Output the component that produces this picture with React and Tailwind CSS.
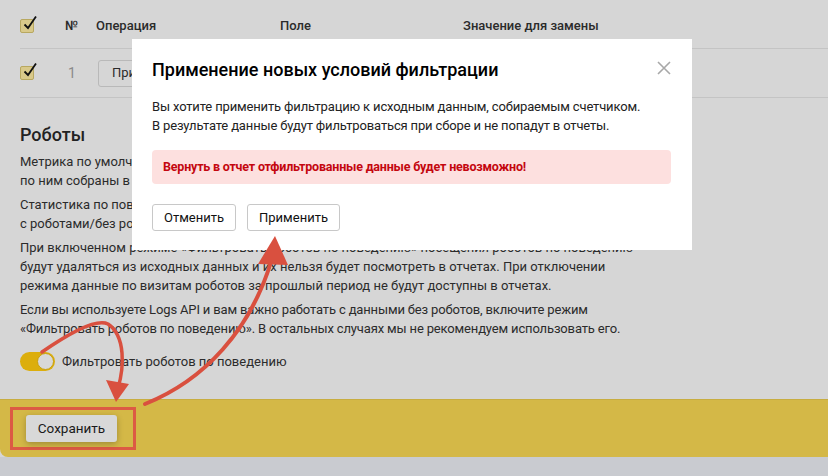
import React from 'react';

const Check = () => (
    <div className="w-[14px] h-[14px] rounded-[2px] border border-[#b8a860] bg-[#d9c98a] relative">
        <svg viewBox="0 0 16 16" className="absolute -top-[5px] left-[1px] w-[16px] h-[16px]">
            <path d="M2.5 9.5 L6 13 L14 1.5" fill="none" stroke="#111" strokeWidth="1.8" />
        </svg>
    </div>
);

const App = () => {
    return (
        <div className="relative w-[828px] h-[476px] overflow-hidden bg-[#d6d6d6] text-[#2b2b2b] font-['Roboto',sans-serif] text-[13px]">

            {/* Table */}
            <div className="pl-5">
                <div className="h-[49px] pt-[3px] flex items-center border-b border-[#c4c4c4]">
                    <div className="w-[45px]"><Check /></div>
                    <div className="w-[31px] font-medium">№</div>
                    <div className="w-[184px] font-medium">Операция</div>
                    <div className="w-[183px] font-medium">Поле</div>
                    <div className="font-medium">Значение для замены</div>
                </div>
                <div className="h-[49px] flex items-center border-b border-[#c4c4c4]">
                    <div className="w-[48px]"><Check /></div>
                    <div className="w-[30px] text-[#8a8a8a] text-[14px]">1</div>
                    <button className="h-[27px] px-[13px] border border-[#b9b9b9] rounded-[3px] text-[13px]">Применить</button>
                </div>
            </div>

            {/* Robots */}
            <div className="pl-5 w-[640px]">
                <div className="mt-[25px] text-[18px] font-medium leading-[24px] text-[#222]">Роботы</div>
                <div className="mt-[5px] flex flex-col gap-[5px] leading-[19px]">
                    <p>Метрика по умолчанию фильтрует роботов по строгим правилам, а данные<br />по ним собраны в отчете «Роботы».</p>
                    <p>Статистика по поведению роботов доступна в отчетах при выборе сегмента<br />с роботами/без роботов.</p>
                    <p>При включенном режиме «Фильтровать роботов по поведению» посещения роботов по поведению будут удаляться из исходных данных и их нельзя будет посмотреть в отчетах. При отключении режима данные по визитам роботов за прошлый период не будут доступны в отчетах.</p>
                    <p className="tracking-[-0.15px]">Если вы используете Logs API и вам важно работать с данными без роботов, включите режим «Фильтровать роботов по поведению». В остальных случаях мы не рекомендуем использовать его.</p>
                </div>
                <div className="mt-[14px] flex items-center gap-[7px]">
                    <div className="w-[35px] h-[19px] rounded-full bg-[#dcae0c] flex items-center justify-end pr-[1px]">
                        <div className="w-[17px] h-[17px] rounded-full bg-[#d8d8d8] border border-[#c9a00c]"></div>
                    </div>
                    <span>Фильтровать роботов по поведению</span>
                </div>
            </div>

            {/* Bottom bar */}
            <div className="absolute left-0 right-0 top-[399px] h-[58px] bg-[#d4b847] rounded-bl-[8px] border-t border-[#c8ad40] flex items-center pl-[10px]">
                <div className="w-[126px] h-[43px] border-[3px] border-[#dc5a44] flex items-center pl-[13px]">
                    <button className="h-[27px] w-[91px] rounded-[3px] bg-[#d8d8d8] text-[13.5px] text-[#1a1a1a] shadow-[0_2px_6px_rgba(0,0,0,0.25)]">Сохранить</button>
                </div>
            </div>
            <div className="absolute left-0 right-0 top-[457px] bottom-0 bg-[#c9cbd0]"></div>

            {/* Modal */}
            <div className="absolute left-[132px] top-[39px] w-[560px] h-[211px] bg-white px-5 pt-[18px] text-[#222]">
                <div className="flex items-start justify-between">
                    <div className="text-[18px] font-medium leading-[26px] text-black">Применение новых условий фильтрации</div>
                    <svg viewBox="0 0 16 16" className="w-[16px] h-[16px] mt-[3px]">
                        <path d="M2 2 L14 14 M14 2 L2 14" stroke="#a8a8a8" strokeWidth="1.6" />
                    </svg>
                </div>
                <div className="mt-[14px] leading-[19px] tracking-[-0.15px]">
                    <p>Вы хотите применить фильтрацию к исходным данным, собираемым счетчиком.</p>
                    <p>В результате данные будут фильтроваться при сборе и не попадут в отчеты.</p>
                </div>
                <div className="mt-[15px] mr-[1px] h-[34px] rounded-[4px] bg-[#fde0df] flex items-center px-[11px] font-bold text-[12.5px] tracking-[-0.2px] text-[#c4070f]">
                    Вернуть в отчет отфильтрованные данные будет невозможно!
                </div>
                <div className="mt-[20px] flex gap-[11px]">
                    <button className="h-[27px] px-[11px] border border-[#c8c8c8] rounded-[3px] text-[13px] text-[#111]">Отменить</button>
                    <button className="h-[27px] px-[11px] border border-[#c8c8c8] rounded-[3px] text-[13px] text-[#111]">Применить</button>
                </div>
            </div>

            {/* Annotation arrows */}
            <svg className="absolute inset-0 w-[828px] h-[476px] pointer-events-none" viewBox="0 0 828 476">
                <path d="M145 404 C 205 380, 250 330, 271 262" fill="none" stroke="#d9503f" strokeWidth="4" strokeLinecap="round" />
                <path d="M275 236 L258 264 L288 265 Z" fill="#d9503f" />
                <path d="M42 352 C 68 334, 96 318, 108 324 C 126 336, 124 368, 118 388" fill="none" stroke="#d9503f" strokeWidth="3.5" strokeLinecap="round" />
                <path d="M116 402 L106 380 L129 384 Z" fill="#d9503f" />
            </svg>
        </div>
    );
};

export default App;
